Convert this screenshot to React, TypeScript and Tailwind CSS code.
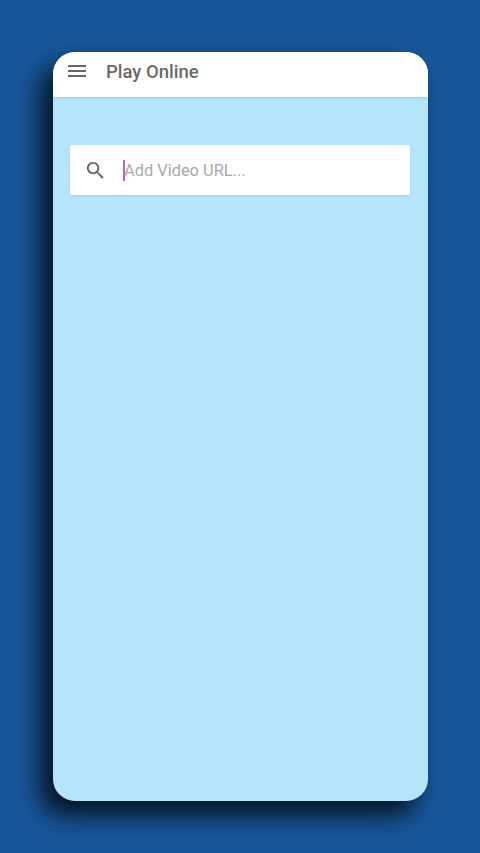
import React from 'react';

export default function App() {
  return (
    <div className="h-[853px] w-[480px] overflow-hidden bg-[#18569a] pt-[52px] pl-[53px] font-['Roboto',sans-serif]">
      <div className="flex h-[749px] w-[375px] flex-col overflow-hidden rounded-[22px] bg-[#b5e5fb] shadow-[-12px_14px_26px_rgba(0,0,0,0.8)]">
        {/* App bar */}
        <div className="flex h-[45px] shrink-0 items-center bg-white pb-[7px] pl-[12px] shadow-[0_1px_3px_rgba(0,0,0,0.12)]">
          <svg viewBox="0 0 24 24" className="h-[24px] w-[24px] fill-[#666666]">
            <path d="M3 18h18v-2H3v2zm0-5h18v-2H3v2zm0-7v2h18V6H3z" />
          </svg>
          <span className="ml-[17px] pt-[3px] text-[18.5px] font-medium text-[#6a6a6a]">Play Online</span>
        </div>

        {/* Search box */}
        <div className="mx-[17px] mt-[48px] flex h-[50px] w-[340px] items-center rounded-[2px] bg-white pl-[13.5px] shadow-[0_1px_2px_rgba(0,0,0,0.08)]">
          <svg viewBox="0 0 24 24" className="h-[23px] w-[23px] fill-[#666666]">
            <path d="M15.5 14h-.79l-.28-.27C15.41 12.59 16 11.11 16 9.5 16 5.91 13.09 3 9.5 3S3 5.91 3 9.5 5.91 16 9.5 16c1.61 0 3.09-.59 4.23-1.57l.27.28v.79l5 4.99L20.49 19l-4.99-5zm-6 0C7.01 14 5 11.99 5 9.5S7.01 5 9.5 5 14 7.01 14 9.5 11.99 14 9.5 14z" />
          </svg>
          <div className="ml-[16.5px] h-[21px] w-[2px] bg-[#ad6bb5]" />
          <span className="-ml-[1px] pt-[2px] text-[16.4px] text-[#a8a8a8]">Add Video URL...</span>
        </div>
      </div>
    </div>
  );
}
